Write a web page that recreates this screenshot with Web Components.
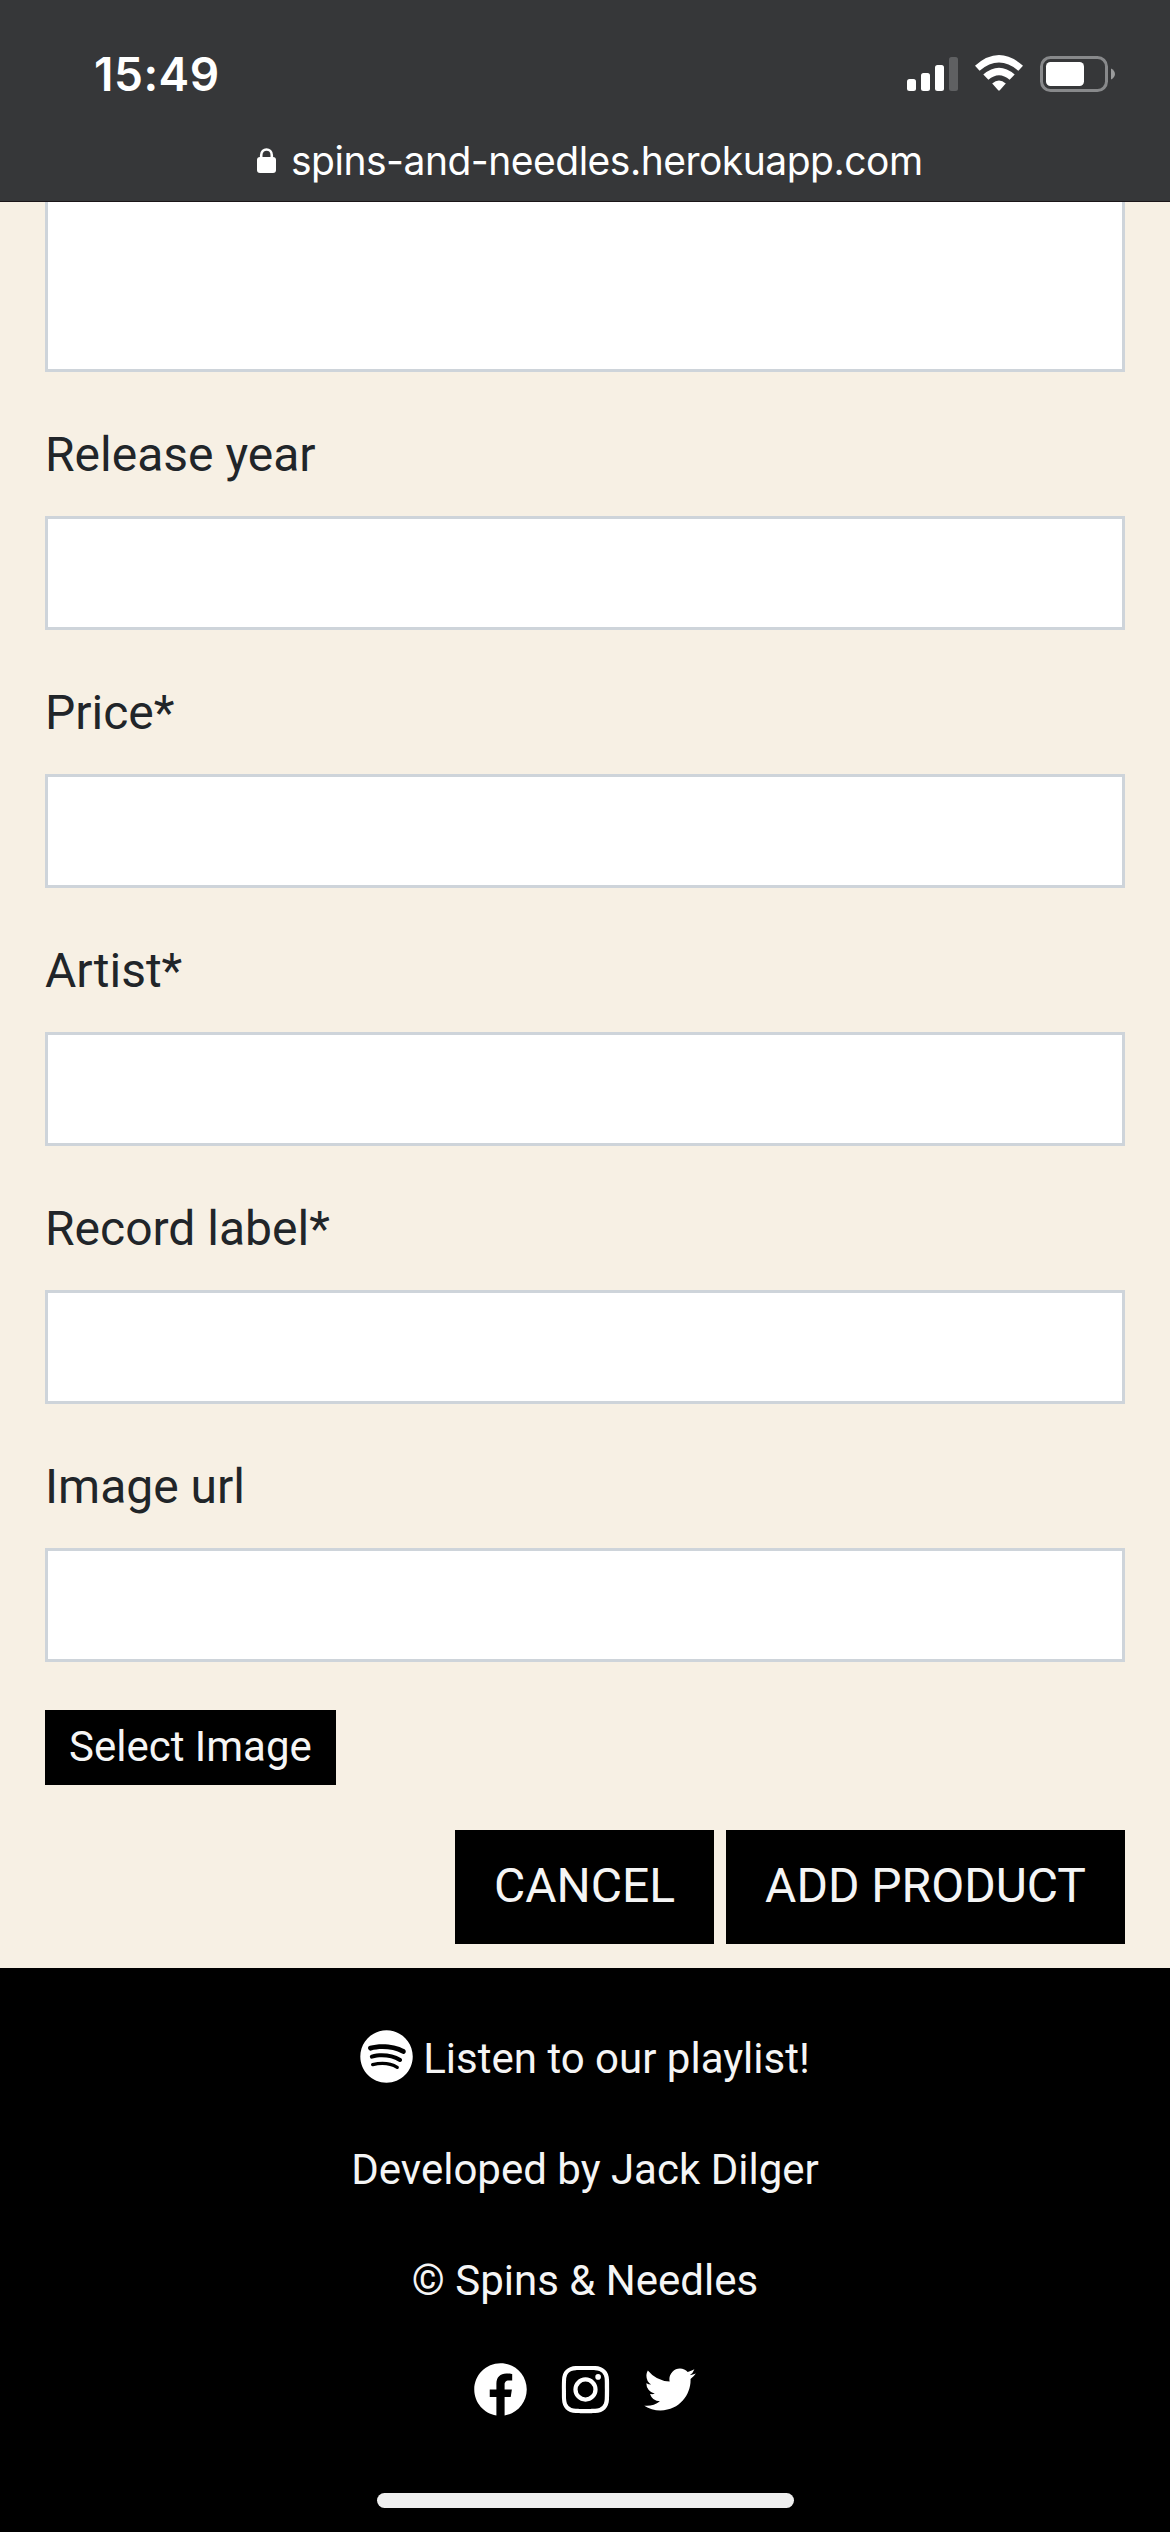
<!DOCTYPE html>
<html lang="en">
<head>
<meta charset="utf-8">
<title>Spins &amp; Needles</title>
<style>
html,body{margin:0;padding:0}
body{width:1170px;height:2532px;overflow:hidden;background:#f7f0e4;color:#212529;font-family:Roboto,"Liberation Sans",sans-serif}
</style>
</head>
<body>
<spins-page></spins-page>
<script>
const define = (name, html) => {
  const template = document.createElement('template');
  template.innerHTML = html;
  customElements.define(name, class extends HTMLElement {
    constructor() {
      super();
      this.attachShadow({ mode: 'open' }).append(template.content.cloneNode(true));
    }
  });
};

define('status-bar', `
<style>
:host{display:flex;justify-content:space-between;align-items:flex-start;box-sizing:border-box;height:136px;padding:46px 54px 0 94px;color:#fff;font:600 46px/56px Inter,sans-serif;letter-spacing:.5px}
svg{display:block;margin-top:8px}
</style>
<slot></slot>
<svg width="210" height="40" viewBox="906 54 210 40" fill="#fff">
  <rect x="907" y="79" width="9" height="12" rx="2.5"/>
  <rect x="921" y="73" width="9" height="18" rx="2.5"/>
  <rect x="935" y="65" width="9" height="26" rx="2.5"/>
  <rect x="949" y="57" width="9" height="34" rx="2.5" fill="#5f6062"/>
  <path d="M975 65.8Q999 44.4 1023 65.8L1018.4 70.8Q999 54.4 979.6 70.8Z"/>
  <path d="M983.3 74.6Q999 61 1014.7 74.6L1009.6 79.7Q999 70.6 988.4 79.7Z"/>
  <path d="M992.2 83.6Q999 77.4 1005.8 83.6L999.8 90.3Q999 91 998.2 90.3Z"/>
  <rect x="1041.5" y="57.5" width="65" height="33" rx="9" fill="none" stroke="#88898b" stroke-width="3"/>
  <rect x="1046" y="62" width="38" height="24" rx="4.5"/>
  <path d="M1111 68.5C1116.3 71 1116.3 77 1111 79.5Z" fill="#9a9b9c"/>
</svg>`);

define('address-bar', `
<style>
:host{display:flex;align-items:flex-start;box-sizing:border-box;height:65px;padding:1px 0 0 257px;color:#fff;font:400 39px/48px Inter,sans-serif;letter-spacing:-.5px;white-space:nowrap}
svg{display:block;flex:none;margin:11px 15px 0 0}
</style>
<svg width="19" height="25" viewBox="0 0 19 25">
  <path d="M4.2 11V7.2C4.2-.4 14.8-.4 14.8 7.2V11" fill="none" stroke="#fff" stroke-width="2.6"/>
  <rect y="9" width="19" height="16" rx="3" fill="#fff"/>
</svg>
<slot></slot>`);

define('browser-chrome', `
<style>:host{display:block;box-sizing:border-box;height:202px;background:#363739;border-bottom:1px solid #1b1518}</style>
<slot></slot>`);

define('text-box', `
<style>:host{display:block;box-sizing:border-box;height:114px;background:#fff;border:3px solid #ced4da}:host([multiline]){height:170px;border-top:0}</style>`);

define('form-field', `
<style>
:host{display:flex;flex-direction:column;gap:24px}
label{display:block;height:72px;font-size:48px;line-height:70px}
</style>
<label><slot></slot></label><text-box></text-box>`);

define('action-button', `
<style>
:host{display:block}
button{display:block;margin:0;box-sizing:border-box;border:0;border-radius:0;background:#000;color:#f5f5f5;font:400 48px/72px Roboto,sans-serif;height:114px;padding:0 39px 2px;white-space:nowrap}
:host([small]) button{font-size:42px;line-height:63px;height:75px;padding:0 24px 2px}
</style>
<button type="button"><slot></slot></button>`);

define('product-form', `
<style>
:host{display:block;padding:0 45px 24px}
.fields{display:flex;flex-direction:column;gap:48px}
.pick{display:flex;margin-top:48px}
.actions{display:flex;justify-content:flex-end;gap:12px;margin-top:45px}
</style>
<div class="fields">
  <text-box multiline></text-box>
  <form-field>Release year</form-field>
  <form-field>Price*</form-field>
  <form-field>Artist*</form-field>
  <form-field>Record label*</form-field>
  <form-field>Image url</form-field>
</div>
<div class="pick"><action-button small>Select Image</action-button></div>
<div class="actions"><action-button>CANCEL</action-button><action-button>ADD PRODUCT</action-button></div>`);

const icons = {
  spotify: 'M12.01 2.02c-5.525 0-9.99 4.475-9.99 9.99 0 5.525 4.475 9.99 9.99 9.99 5.525 0 9.99-4.475 9.99-9.99 0-5.515-4.465-9.99-9.99-9.99zm4.604 14.43a.61.61 0 0 1-.861.21c-2.374-1.444-5.344-1.773-8.864-.968a.626.626 0 1 1-.28-1.22c3.843-.88 7.15-.505 9.8 1.12.3.17.39.56.205.858zm1.2-2.73a.77.77 0 0 1-1.07.25c-2.714-1.665-6.86-2.15-10.067-1.17a.79.79 0 0 1-.98-.52.79.79 0 0 1 .52-.98c3.673-1.115 8.234-.57 11.357 1.34.36.22.48.71.24 1.08zm.105-2.835c-3.25-1.935-8.625-2.115-11.725-1.165a.94.94 0 1 1-.55-1.8c3.57-1.08 9.49-.87 13.23 1.345.45.26.6.84.34 1.29-.26.46-.84.6-1.295.33z',
  facebook: 'M12.001 2.002c-5.522 0-9.999 4.477-9.999 9.999 0 4.99 3.656 9.126 8.437 9.879v-6.988h-2.54v-2.891h2.54V9.798c0-2.508 1.493-3.891 3.776-3.891 1.094 0 2.24.195 2.24.195v2.459h-1.264c-1.24 0-1.628.772-1.628 1.563v1.875h2.771l-.443 2.891h-2.328v6.988C18.344 21.129 22 16.992 22 12.001c0-5.522-4.477-9.999-9.999-9.999z',
  instagram: 'M11.999 7.377a4.623 4.623 0 1 0 0 9.248 4.623 4.623 0 0 0 0-9.248zm0 7.627a3.004 3.004 0 1 1 0-6.008 3.004 3.004 0 0 1 0 6.008zM15.728 7.207a1.078 1.078 0 1 0 2.156 0 1.078 1.078 0 1 0-2.156 0zM20.533 6.111A4.605 4.605 0 0 0 17.9 3.479a6.606 6.606 0 0 0-2.186-.42c-.963-.042-1.268-.054-3.71-.054s-2.755 0-3.71.054a6.554 6.554 0 0 0-2.184.42 4.6 4.6 0 0 0-2.633 2.632 6.585 6.585 0 0 0-.419 2.186c-.043.962-.056 1.267-.056 3.71 0 2.442 0 2.753.056 3.71.015.748.156 1.486.419 2.187a4.61 4.61 0 0 0 2.634 2.632 6.584 6.584 0 0 0 2.185.45c.963.042 1.268.055 3.71.055s2.755 0 3.71-.055a6.615 6.615 0 0 0 2.186-.419 4.613 4.613 0 0 0 2.633-2.633c.263-.7.404-1.438.419-2.186.043-.962.056-1.267.056-3.71s0-2.753-.056-3.71a6.581 6.581 0 0 0-.421-2.217zm-1.218 9.532a5.043 5.043 0 0 1-.311 1.688 2.987 2.987 0 0 1-1.712 1.711 4.985 4.985 0 0 1-1.67.311c-.95.044-1.218.055-3.654.055-2.438 0-2.687 0-3.655-.055a4.96 4.96 0 0 1-1.669-.311 2.985 2.985 0 0 1-1.719-1.711 5.08 5.08 0 0 1-.311-1.669c-.043-.95-.053-1.218-.053-3.654 0-2.437 0-2.686.053-3.655a5.038 5.038 0 0 1 .311-1.687c.305-.789.93-1.41 1.719-1.712a5.01 5.01 0 0 1 1.669-.311c.951-.043 1.218-.055 3.655-.055s2.687 0 3.654.055a4.96 4.96 0 0 1 1.67.311 2.991 2.991 0 0 1 1.712 1.712 5.08 5.08 0 0 1 .311 1.669c.043.951.055 1.218.055 3.655 0 2.436 0 2.698-.043 3.654h-.011z',
  twitter: 'M19.633 7.997c.013.175.013.349.013.523 0 5.325-4.053 11.461-11.46 11.461-2.282 0-4.402-.661-6.186-1.809.324.037.636.05.973.05a8.07 8.07 0 0 0 5.001-1.721 4.036 4.036 0 0 1-3.767-2.793c.249.037.499.062.761.062.361 0 .724-.05 1.061-.137a4.027 4.027 0 0 1-3.23-3.953v-.05c.537.299 1.16.486 1.82.511a4.022 4.022 0 0 1-1.796-3.354c0-.748.199-1.434.548-2.032a11.457 11.457 0 0 0 8.306 4.215c-.062-.3-.1-.611-.1-.923a4.026 4.026 0 0 1 4.028-4.028c1.16 0 2.207.486 2.943 1.272a7.957 7.957 0 0 0 2.556-.973 4.02 4.02 0 0 1-1.771 2.22 8.073 8.073 0 0 0 2.319-.624 8.645 8.645 0 0 1-2.019 2.083z'
};

customElements.define('brand-icon', class extends HTMLElement {
  connectedCallback() {
    if (this.shadowRoot) return;
    this.attachShadow({ mode: 'open' }).innerHTML =
      `<style>:host,svg{display:block;width:63px;height:63px;flex:none}</style>
       <svg viewBox="0 0 24 24" fill="#fff"><path fill-rule="evenodd" d="${icons[this.getAttribute('name')]}"/></svg>`;
  }
});

define('page-footer', `
<style>
:host{display:flex;flex-direction:column;align-items:center;box-sizing:border-box;height:564px;padding-top:57px;background:#000;color:#f5f5f5;font-size:42px;line-height:63px}
.listen{display:flex;align-items:flex-start;gap:5.5px;height:65px;padding-right:5.5px}
.listen span{margin-top:2px}
p{margin:48px 0 0}
.social{display:flex;gap:22px;margin-top:46px}
</style>
<div class="listen"><brand-icon name="spotify"></brand-icon><span>Listen to our playlist!</span></div>
<p>Developed by Jack Dilger</p>
<p>© Spins &amp; Needles</p>
<div class="social"><brand-icon name="facebook"></brand-icon><brand-icon name="instagram"></brand-icon><brand-icon name="twitter"></brand-icon></div>`);

define('home-indicator', `
<style>:host{display:block;position:absolute;left:377px;top:2493px;width:417px;height:15px;border-radius:7.5px;background:#efefef}</style>`);

define('spins-page', `
<style>:host{display:block;position:relative;width:1170px;height:2532px;overflow:hidden}</style>
<browser-chrome>
  <status-bar>15:49</status-bar>
  <address-bar>spins-and-needles.herokuapp.com</address-bar>
</browser-chrome>
<product-form></product-form>
<page-footer></page-footer>
<home-indicator></home-indicator>`);
</script>
</body>
</html>
